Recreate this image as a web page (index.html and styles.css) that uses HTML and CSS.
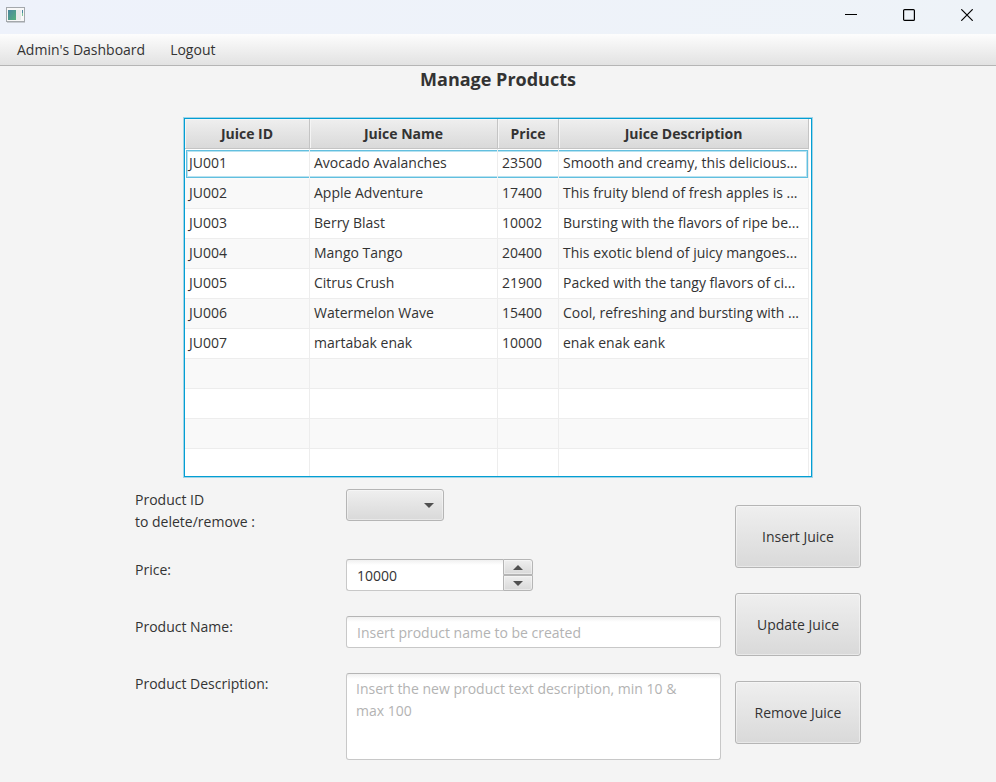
FILE: index.html
```html
<!DOCTYPE html>
<html lang="en">
<head>
<meta charset="utf-8">
<title>Manage Products</title>
<link rel="stylesheet" href="styles.css">
</head>
<body>
<header class="titlebar">
  <svg class="app-icon" width="20" height="16" viewBox="0 0 20 16" aria-hidden="true">
    <defs>
      <linearGradient id="pane" x1="0" y1="0" x2="1" y2="1"><stop offset="0" stop-color="#4a86a0"/><stop offset="1" stop-color="#55b07c"/></linearGradient>
    </defs>
    <rect x=".5" y=".5" width="18" height="14" fill="#f8f8f8" stroke="#a4a8ac"/>
    <path d="M1 15.5h18" stroke="#c8ccd2"/>
    <rect x="2" y="3" width="8" height="10" fill="url(#pane)"/>
    <rect x="10" y="3" width="5" height="10" fill="#e8eaea"/>
    <rect x="16" y="3" width="1" height="3" fill="#4a86a0"/>
    <rect x="16" y="6" width="1" height="3" fill="#7cc49a"/>
  </svg>
  <div class="window-controls">
    <button type="button" aria-label="Minimize"><svg width="12" height="12" viewBox="0 0 12 12"><path d="M0 5.5h12" stroke="#000"/></svg></button>
    <button type="button" aria-label="Maximize"><svg width="12" height="12" viewBox="0 0 12 12"><rect x=".6" y=".6" width="10.8" height="10.8" rx="1" fill="none" stroke="#000" stroke-width="1.2"/></svg></button>
    <button type="button" aria-label="Close"><svg width="12" height="12" viewBox="0 0 12 12"><path d="M.3.3l11.400 11.400M11.700.3L.3 11.700" stroke="#000" stroke-width="1.200"/></svg></button>
  </div>
</header>
<nav class="menubar">
  <a href="#">Admin's Dashboard</a>
  <a href="#">Logout</a>
</nav>
<main>
  <h1>Manage Products</h1>
  <div class="table-view">
    <table>
      <colgroup><col class="col-id"><col class="col-name"><col class="col-price"><col></colgroup>
      <thead><tr><th>Juice ID</th><th>Juice Name</th><th>Price</th><th>Juice Description</th></tr></thead>
      <tbody>
        <tr class="focused"><td>JU001</td><td>Avocado Avalanches</td><td>23500</td><td>Smooth and creamy, this delicious...</td></tr>
        <tr><td>JU002</td><td>Apple Adventure</td><td>17400</td><td>This fruity blend of fresh apples is ...</td></tr>
        <tr><td>JU003</td><td>Berry Blast</td><td>10002</td><td>Bursting with the flavors of ripe be...</td></tr>
        <tr><td>JU004</td><td>Mango Tango</td><td>20400</td><td>This exotic blend of juicy mangoes...</td></tr>
        <tr><td>JU005</td><td>Citrus Crush</td><td>21900</td><td>Packed with the tangy flavors of ci...</td></tr>
        <tr><td>JU006</td><td>Watermelon Wave</td><td>15400</td><td>Cool, refreshing and bursting with ...</td></tr>
        <tr><td>JU007</td><td>martabak enak</td><td>10000</td><td>enak enak eank</td></tr>
        <tr><td></td><td></td><td></td><td></td></tr>
        <tr><td></td><td></td><td></td><td></td></tr>
        <tr><td></td><td></td><td></td><td></td></tr>
        <tr><td></td><td></td><td></td><td></td></tr>
      </tbody>
    </table>
  </div>
  <form class="editor">
    <div class="fields">
      <label for="product-id">Product ID<br>to delete/remove :</label>
      <div class="combo"><select id="product-id"><option></option></select></div>
      <label for="price">Price:</label>
      <div class="spinner">
        <input id="price" type="text" value="10000">
        <div class="steps">
          <button type="button" aria-label="Increase"><svg width="10" height="5" viewBox="0 0 10 5"><path d="M0 5L5 0l5 5z" fill="#505050"/></svg></button>
          <button type="button" aria-label="Decrease"><svg width="10" height="5" viewBox="0 0 10 5"><path d="M0 0h10L5 5z" fill="#505050"/></svg></button>
        </div>
      </div>
      <label for="name">Product Name:</label>
      <input id="name" class="text" type="text" placeholder="Insert product name to be created">
      <label for="description">Product Description:</label>
      <textarea id="description" class="text" placeholder="Insert the new product text description, min 10 &amp; max 100"></textarea>
    </div>
    <div class="actions">
      <button type="button">Insert Juice</button>
      <button type="button">Update Juice</button>
      <button type="button">Remove Juice</button>
    </div>
  </form>
</main>
</body>
</html>
```
FILE: styles.css
```css
* { box-sizing: border-box; }

body {
  margin: 0;
  background: #f4f4f4;
  color: #333;
  font: 14px/22px "Open Sans", "Noto Sans", sans-serif;
}

button, input, select, textarea { font: inherit; color: inherit; margin: 0; }

.titlebar {
  display: flex;
  justify-content: space-between;
  align-items: flex-start;
  height: 34px;
  padding-left: 6px;
  background: linear-gradient(to right, #eef2fb, #eef3f8);
}
.app-icon { margin-top: 7px; }
.window-controls { display: flex; }
.window-controls button {
  display: flex;
  align-items: center;
  justify-content: center;
  width: 58px;
  height: 30px;
  padding: 0;
  border: 0;
  background: none;
}

.menubar {
  display: flex;
  gap: 25px;
  height: 32px;
  padding: 5px 17px;
  border-bottom: 1px solid #b5b5b5;
  background: linear-gradient(#fdfdfd, #e2e2e2);
}
.menubar a { color: inherit; text-decoration: none; }

main {
  display: flex;
  flex-direction: column;
  align-items: center;
}
h1 { margin: 0 0 25px; font-size: 18px; line-height: 27px; }

.table-view {
  width: 628px;
  max-width: 100%;
  height: 359px;
  padding-right: 2px;
  overflow: hidden;
  border: 1px solid #039ed3;
  background: #fff;
  box-shadow: 0 0 0 1px #a0d5e8;
}
table { width: 100%; table-layout: fixed; border-collapse: separate; border-spacing: 0; }
.col-id { width: 125px; }
.col-name { width: 188px; }
.col-price { width: 61px; }
th {
  height: 30px;
  padding: 0;
  border-right: 1px solid #c4c4c4;
  border-bottom: 1px solid #c4c4c4;
  background: linear-gradient(#efefef, #d9d9d9);
  box-shadow: inset 1px 1px #f4f4f4;
}
td {
  height: 30px;
  padding: 0 4px 2px;
  border-right: 1px solid #ededed;
  border-bottom: 1px solid #ededed;
  overflow: hidden;
  white-space: nowrap;
  line-height: 20px;
}
tbody tr:nth-child(even) td { background: #f9f9f9; }
.focused td {
  border-bottom-color: #fbfbfb;
  box-shadow: inset 0 1px #fff, inset 0 2px #62bfdf, inset 0 -1px #62bfdf, inset 0 3px #b8e2f0, inset 0 -2px #b8e2f0;
}
.focused td:first-child {
  box-shadow: inset 1px 1px #fff, inset 2px 2px #62bfdf, inset 0 -1px #62bfdf, inset 3px 3px #b8e2f0, inset 0 -2px #b8e2f0;
}
.focused td:last-child {
  box-shadow: inset 0 1px #fff, inset -1px 2px #62bfdf, inset 0 -1px #62bfdf, inset -2px 3px #b8e2f0, inset 0 -2px #b8e2f0;
}

.editor {
  display: flex;
  align-items: center;
  gap: 14px;
  width: 726px;
  max-width: 100%;
  margin: 12px 0 22px;
}
.fields {
  flex: 1;
  display: grid;
  grid-template-columns: 211px 1fr;
  grid-template-rows: 45px 32px 32px 87px;
  row-gap: 25px;
}
.combo { position: relative; width: 98px; height: 32px; }
.combo::after {
  content: "";
  position: absolute;
  right: 10px;
  top: 14px;
  border: 5px solid transparent;
  border-top-color: #505050;
  border-bottom: 0;
  pointer-events: none;
}
select, .steps button, .actions button {
  appearance: none;
  border: 1px solid #b5b5b5;
  border-radius: 3px;
  background: linear-gradient(#efefef, #d9d9d9);
  box-shadow: inset 0 0 0 1px rgba(255, 255, 255, 0.4);
}
select { width: 100%; height: 100%; }

.text, .spinner input {
  width: 100%;
  border: 1px solid #c8c8c8;
  border-top-color: #b5b5b5;
  border-radius: 3px;
  background: linear-gradient(#f0f0f0, #fff 5px);
  padding: 2px 10px 0;
  outline: 0;
}
textarea.text { padding: 4px 24px 4px 9px; resize: none; }
.text::placeholder { color: #b3b3b3; opacity: 1; }

.spinner { display: flex; width: 187px; height: 32px; }
.spinner input { flex: 1; min-width: 0; border-right: 0; border-radius: 3px 0 0 3px; }
.steps { display: flex; flex-direction: column; width: 30px; }
.steps button {
  flex: 1;
  display: flex;
  align-items: center;
  justify-content: center;
  padding: 0;
  border-radius: 0 3px 0 0;
}
.steps button:last-child { border-radius: 0 0 3px 0; }

.actions { display: flex; flex-direction: column; gap: 25px; width: 126px; }
.actions button { height: 63px; padding: 0; }
```
